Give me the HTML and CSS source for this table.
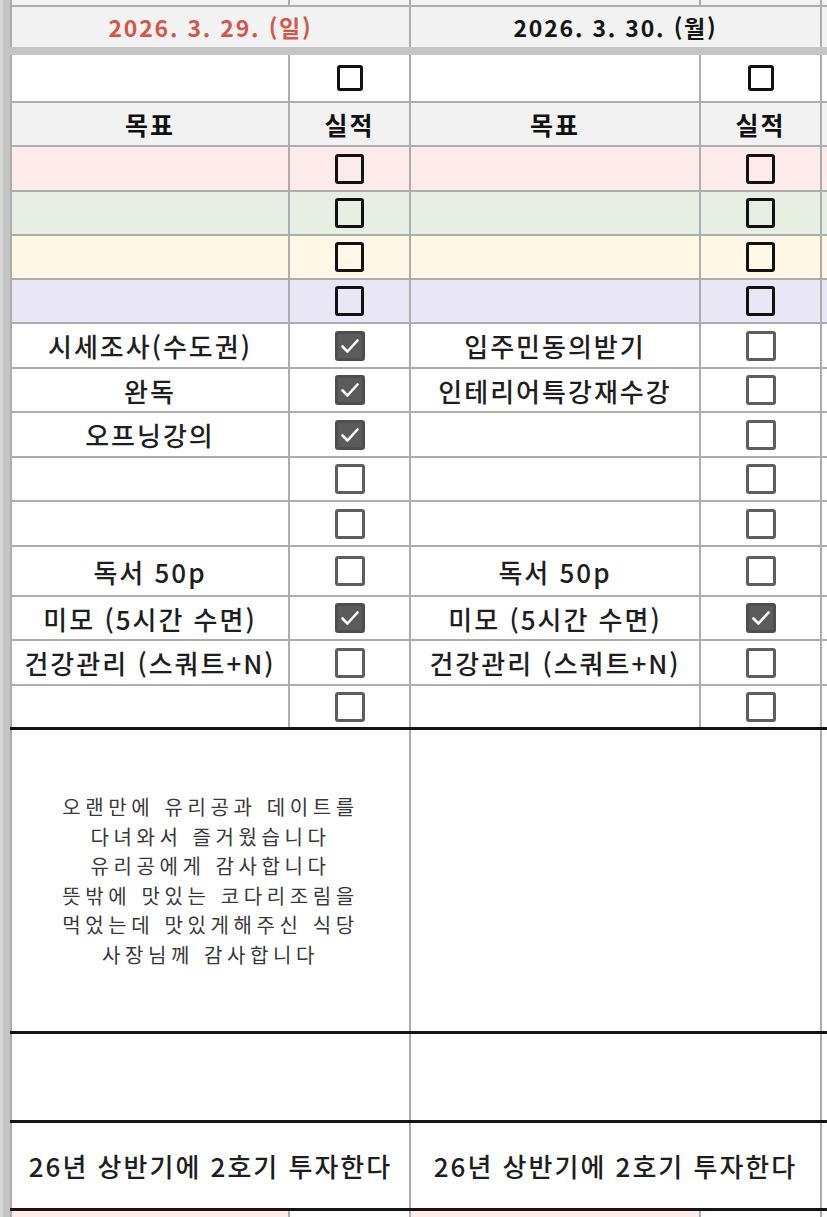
FILE: index.html
```html
<!DOCTYPE html>
<html lang="ko">
<head>
<meta charset="utf-8">
<title>Planner sheet</title>
<link rel="stylesheet" href="styles.css">
</head>
<body>
<div class="screen">
  <div class="bar"></div>
  <div class="sheet">
    <div class="row h5 top">
      <div class="c"></div><div class="c"></div><div class="c"></div><div class="c"></div><div class="c"></div>
    </div>
    <div class="row h40 date noline">
      <div class="c span2 red">2026. 3. 29. (일)</div>
      <div class="c span2">2026. 3. 30. (월)</div>
      <div class="c"></div>
    </div>
    <div class="freeze"></div>

    <div class="row h46">
      <div class="c"></div><div class="c"><span class="cb hdr"></span></div>
      <div class="c"></div><div class="c"><span class="cb hdr"></span></div>
      <div class="c"></div>
    </div>
    <div class="row h42 head">
      <div class="c">목표</div><div class="c">실적</div>
      <div class="c">목표</div><div class="c">실적</div>
      <div class="c"></div>
    </div>
    <div class="row h43 pink">
      <div class="c"></div><div class="c"><span class="cb dark"></span></div>
      <div class="c"></div><div class="c"><span class="cb dark"></span></div>
      <div class="c"></div>
    </div>
    <div class="row h42 green">
      <div class="c"></div><div class="c"><span class="cb dark"></span></div>
      <div class="c"></div><div class="c"><span class="cb dark"></span></div>
      <div class="c"></div>
    </div>
    <div class="row h42 yellow">
      <div class="c"></div><div class="c"><span class="cb dark"></span></div>
      <div class="c"></div><div class="c"><span class="cb dark"></span></div>
      <div class="c"></div>
    </div>
    <div class="row h42 purple">
      <div class="c"></div><div class="c"><span class="cb dark"></span></div>
      <div class="c"></div><div class="c"><span class="cb dark"></span></div>
      <div class="c"></div>
    </div>

    <div class="row h43 item">
      <div class="c">시세조사(수도권)</div><div class="c"><span class="cb on"><svg viewBox="0 0 30 30"><path d="M7.5 15.5 L12.5 20.5 L22.5 9.5"/></svg></span></div>
      <div class="c">입주민동의받기</div><div class="c"><span class="cb"></span></div>
      <div class="c"></div>
    </div>
    <div class="row h42 item">
      <div class="c">완독</div><div class="c"><span class="cb on"><svg viewBox="0 0 30 30"><path d="M7.5 15.5 L12.5 20.5 L22.5 9.5"/></svg></span></div>
      <div class="c">인테리어특강재수강</div><div class="c"><span class="cb"></span></div>
      <div class="c"></div>
    </div>
    <div class="row h43 item">
      <div class="c">오프닝강의</div><div class="c"><span class="cb on"><svg viewBox="0 0 30 30"><path d="M7.5 15.5 L12.5 20.5 L22.5 9.5"/></svg></span></div>
      <div class="c"></div><div class="c"><span class="cb"></span></div>
      <div class="c"></div>
    </div>
    <div class="row h42 item">
      <div class="c"></div><div class="c"><span class="cb"></span></div>
      <div class="c"></div><div class="c"><span class="cb"></span></div>
      <div class="c"></div>
    </div>
    <div class="row h43 item">
      <div class="c"></div><div class="c"><span class="cb"></span></div>
      <div class="c"></div><div class="c"><span class="cb"></span></div>
      <div class="c"></div>
    </div>
    <div class="row h48 item">
      <div class="c">독서 50p</div><div class="c"><span class="cb"></span></div>
      <div class="c">독서 50p</div><div class="c"><span class="cb"></span></div>
      <div class="c"></div>
    </div>
    <div class="row h42 item">
      <div class="c">미모 (5시간 수면)</div><div class="c"><span class="cb on"><svg viewBox="0 0 30 30"><path d="M7.5 15.5 L12.5 20.5 L22.5 9.5"/></svg></span></div>
      <div class="c">미모 (5시간 수면)</div><div class="c"><span class="cb on"><svg viewBox="0 0 30 30"><path d="M7.5 15.5 L12.5 20.5 L22.5 9.5"/></svg></span></div>
      <div class="c"></div>
    </div>
    <div class="row h43 item">
      <div class="c">건강관리 (스쿼트+N)</div><div class="c"><span class="cb"></span></div>
      <div class="c">건강관리 (스쿼트+N)</div><div class="c"><span class="cb"></span></div>
      <div class="c"></div>
    </div>
    <div class="row h41 item thick">
      <div class="c"></div><div class="c"><span class="cb"></span></div>
      <div class="c"></div><div class="c"><span class="cb"></span></div>
      <div class="c"></div>
    </div>

    <div class="row h301 thick diary">
      <div class="c span2">오랜만에 유리공과 데이트를<br>다녀와서 즐거웠습니다<br>유리공에게 감사합니다<br>뜻밖에 맛있는 코다리조림을<br>먹었는데 맛있게해주신 식당<br>사장님께 감사합니다</div>
      <div class="c span2"></div>
      <div class="c"></div>
    </div>
    <div class="row h86 thick">
      <div class="c span2"></div>
      <div class="c span2"></div>
      <div class="c"></div>
    </div>
    <div class="row h85 thick item">
      <div class="c span2">26년 상반기에 2호기 투자한다</div>
      <div class="c span2">26년 상반기에 2호기 투자한다</div>
      <div class="c"></div>
    </div>
    <div class="row h10 bottom noline">
      <div class="c pinkc"></div><div class="c"></div>
      <div class="c pinkc"></div><div class="c"></div>
      <div class="c"></div>
    </div>
  </div>
</div>
</body>
</html>
```
FILE: styles.css
```css
html, body {
  margin: 0;
  padding: 0;
  background: #ffffff;
}

.screen {
  display: flex;
  width: 827px;
  height: 1217px;
  overflow: hidden;
  font-family: "Noto Sans CJK KR", "Noto Sans", sans-serif;
  color: #1c1c1c;
}

.bar {
  flex: 0 0 10px;
  background: linear-gradient(to right, #d6d6d6 0 3px, #c4c4c4 3px 10px);
}

.sheet {
  flex: 1;
  display: flex;
  flex-direction: column;
  min-width: 0;
}

.row {
  display: grid;
  grid-template-columns: 276px 119px 288px 119px 1fr;
  column-gap: 2px;
  padding-left: 2px;
  background: #adadad;
  border-bottom: 2px solid #adadad;
  flex: 0 0 auto;
}

.row.noline { border-bottom: 0; }
.row.thick { border-bottom: 3px solid #141414; }

.h5 { height: 5px; }
.h10 { height: 10px; }
.h40 { height: 40px; }
.h41 { height: 41px; }
.h42 { height: 42px; }
.h43 { height: 43px; }
.h46 { height: 46px; }
.h48 { height: 48px; }
.h85 { height: 85px; }
.h86 { height: 86px; }
.h301 { height: 301px; }

.c {
  background: #ffffff;
  display: flex;
  align-items: center;
  justify-content: center;
  text-align: center;
  white-space: nowrap;
  min-width: 0;
  overflow: hidden;
}

.span2 { grid-column: span 2; }

.top .c { background: #f3f3f3; }

.freeze {
  height: 8px;
  background: #c5c5c5;
  flex: 0 0 auto;
}

.date .c {
  background: #f2f2f2;
  font-size: 23px;
  font-weight: 700;
  letter-spacing: 1.8px;
  color: #151515;
}
.date .c.red { color: #d4574d; }

.head .c {
  background: #f2f2f2;
  font-size: 25px;
  font-weight: 700;
  letter-spacing: 2px;
  color: #111;
}

.pink .c { background: #fdeaea; }
.green .c { background: #e6efe2; }
.yellow .c { background: #fff8e7; }
.purple .c { background: #e9e6f6; }
.bottom .c { background: #ffffff; }
.bottom .c.pinkc { background: #fdeaea; }

.item .c {
  font-size: 26px;
  font-weight: 500;
  letter-spacing: 2px;
  color: #1e1e1e;
}

.diary .c {
  font-size: 20px;
  line-height: 29.5px;
  letter-spacing: 4.6px;
  color: #383838;
  white-space: normal;
}

.cb {
  display: block;
  box-sizing: border-box;
  width: 30px;
  height: 30px;
  border: 3px solid #5e5e5e;
  border-radius: 3px;
  background: #ffffff;
}

.cb.dark {
  width: 29px;
  height: 30px;
  border: 3px solid #111111;
  background: transparent;
}

.cb.hdr {
  width: 26px;
  height: 26px;
  border: 3.5px solid #111111;
  background: #ffffff;
}

.cb.on {
  background: #5b5b5b;
  border-color: #4e4e4e;
}

.cb svg {
  display: block;
  margin: -3px;
  width: 30px;
  height: 30px;
}

.cb svg path {
  fill: none;
  stroke: #ffffff;
  stroke-width: 2.6;
  stroke-linecap: round;
  stroke-linejoin: round;
}
```
